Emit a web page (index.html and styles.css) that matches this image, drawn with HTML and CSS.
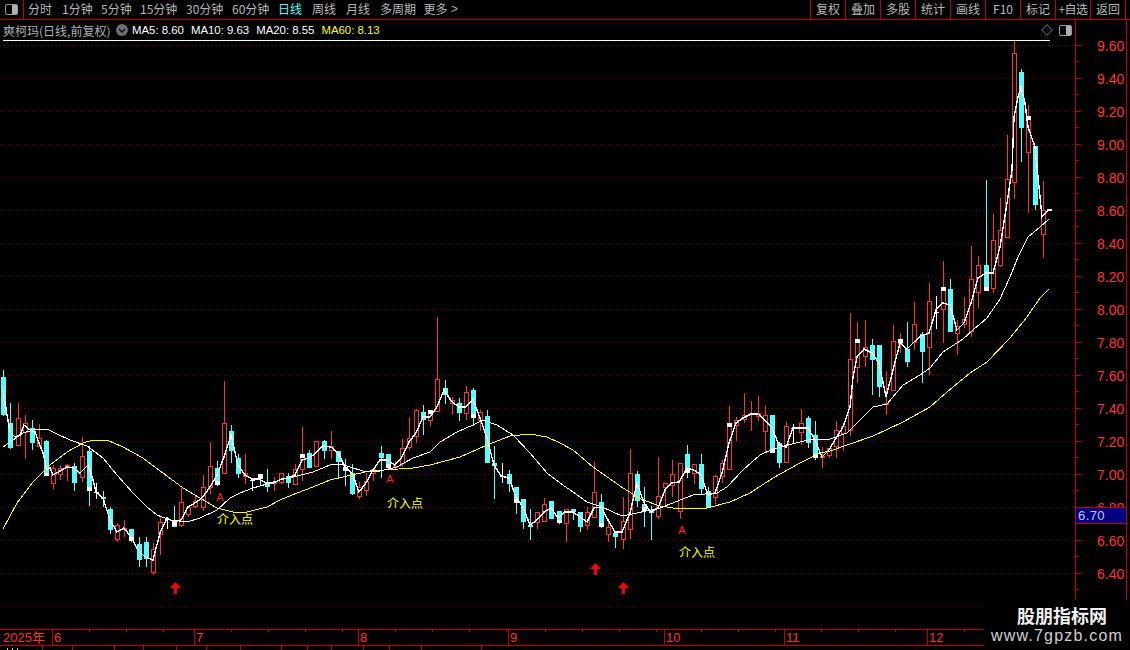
FILE: index.html
```html
<!DOCTYPE html>
<html lang="zh-CN">
<head>
<meta charset="utf-8">
<title>爽柯玛 日线</title>
<link rel="stylesheet" href="styles.css">
</head>
<body>
<div class="app">
  <header class="toolbar">
    <div class="panel-btn"><svg class="panel-icon" viewBox="0 0 13 11"><rect x="0.5" y="0.5" width="12" height="10" rx="1.5" fill="#000" stroke="#9a9a9a"/><rect x="7" y="1" width="5" height="9" fill="#b0b0b0"/></svg></div>
    <nav class="periods">
      <span class="p w24">分时</span><span class="p w30">1分钟</span><span class="p w30">5分钟</span><span class="p w36">15分钟</span><span class="p w36">30分钟</span><span class="p w36">60分钟</span><span class="p w24 on">日线</span><span class="p w24">周线</span><span class="p w24">月线</span><span class="p w36">多周期</span><span class="p w26">更多</span><span class="more">&gt;</span>
    </nav>
    <nav class="tools">
      <span class="t">复权</span><span class="t">叠加</span><span class="t">多股</span><span class="t">统计</span><span class="t">画线</span><span class="t">F10</span><span class="t">标记</span><span class="t tight">+自选</span><span class="t">返回</span>
    </nav>
  </header>
  <main class="main">
    <section class="pane">
      <div class="info">
        <span class="stock">爽柯玛(日线,前复权)</span>
        <svg class="chev" viewBox="0 0 12 12"><circle cx="6" cy="6" r="6" fill="#6e6e6e"/><path d="M3 5l3 3 3-3" fill="none" stroke="#111" stroke-width="1.4"/></svg>
        <span class="ma">MA5: 8.60</span><span class="ma">MA10: 9.63</span><span class="ma">MA20: 8.55</span><span class="ma y">MA60: 8.13</span>
        <span class="info-icons">
          <svg class="diamond" viewBox="0 0 12 12"><path d="M6 .7L11.3 6 6 11.3.7 6z" fill="none" stroke="#7c7c7c"/></svg>
          <svg class="panel-icon" viewBox="0 0 13 11"><rect x="0.5" y="0.5" width="12" height="10" rx="1.5" fill="#000" stroke="#9a9a9a"/><rect x="7" y="1" width="5" height="9" fill="#b0b0b0"/></svg>
        </span>
      </div>
      <svg id="plot" class="plot" viewBox="0 40 1075 590"></svg>
    </section>
    <aside class="axis">
      <svg id="scale" class="scale" viewBox="1076 20 50 610"></svg>
      <div class="last">6.70</div>
    </aside>
  </main>
  <footer class="timeline">
    <span class="m first">2025年</span><span class="m">6</span><span class="m">7</span><span class="m">8</span><span class="m">9</span><span class="m">10</span><span class="m">11</span><span class="m">12</span>
  </footer>
  <div class="tabs"><span></span><span></span><span></span><span></span><span></span><span></span><span></span><span></span><span></span><span></span><span></span><span></span><span></span><span></span></div>
  <div class="mark">
    <div class="mark-name">股朋指标网</div>
    <div class="mark-url">www.7gpzb.com</div>
  </div>
</div>
<script src="chart.js"></script>
</body>
</html>
```
FILE: styles.css
```css
* { box-sizing: border-box; }
html, body { margin: 0; height: 100%; background: #000; overflow: hidden; }
body { font-family: "Noto Sans CJK SC", "Liberation Sans", sans-serif; color: #c0c0c0; }
.app { position: relative; width: 1130px; height: 650px; display: flex; flex-direction: column; background: #000; }

.toolbar { height: 20px; flex: none; display: flex; border-bottom: 1px solid #c00000; font-size: 12px; line-height: 18px; color: #b8b8b8; }
.panel-btn { width: 24px; flex: none; border-right: 1px solid #c00000; display: flex; align-items: center; justify-content: center; }
.panel-icon { width: 13px; height: 11px; display: block; }
.periods { display: flex; padding-left: 4px; gap: 10px; flex: 1; white-space: nowrap; }
.p { display: block; text-align: center; }
.w24 { width: 24px; }
.w26 { width: 25px; margin-left: -3px; }
.w30 { width: 29px; }
.w36 { width: 36px; }
.on { color: #55ffff; }
.more { margin-left: -7px; color: #b0b0b0; font-family: "Liberation Sans", sans-serif; }
.tools { display: flex; width: 316px; margin-right: 4px; border-left: 1px solid #c00000; border-right: 1px solid #c00000; }
.t { flex: 1; text-align: center; border-left: 1px solid #c00000; white-space: nowrap; }
.t:first-child { border-left: 0; }
.tight { letter-spacing: -0.5px; }

.main { flex: 1; display: flex; min-height: 0; }
.pane { width: 1075px; flex: none; display: flex; flex-direction: column; }
.info { height: 20px; flex: none; display: flex; align-items: center; padding-left: 3px; font-size: 12px; white-space: nowrap; }
.stock { width: 113px; flex: none; color: #b0b0b0; }
.chev { width: 12px; height: 12px; flex: none; margin-right: 4px; }
.ma { font: 11.4px "Liberation Sans", sans-serif; color: #fff; margin-right: 7px; }
.y { color: #ffff00; }
.info-icons { margin-left: auto; display: flex; align-items: center; gap: 6px; padding-right: 3px; }
.diamond { width: 12px; height: 12px; display: block; }
.plot { width: 1075px; height: 590px; display: block; flex: none; }
.axis { position: relative; width: 52px; flex: none; border-left: 1px solid #c00000; border-right: 1px solid #c00000; }
.scale { width: 50px; height: 610px; display: block; }
.last { position: absolute; left: -1px; right: -1px; top: 487px; height: 17px; background: #000080; border: 1px solid #c00000; color: #c4c4e8; font: 13px/15px "Liberation Sans", sans-serif; padding-left: 2px; letter-spacing: 0.4px; }

.timeline { height: 17px; flex: none; display: grid; grid-template-columns: 52px 142px 164px 150px 156px 120px 143px 1fr; border-top: 1px solid #c00000; border-bottom: 1px solid #c00000; color: #ff3232; font-size: 13px; line-height: 15px; }
.m { padding-left: 1px; font-family: "Liberation Sans", sans-serif; border-left: 1px solid #c00000; background: repeating-linear-gradient(90deg, transparent 0 36px, #c00000 36px 37px) 0 0 / 100% 2px no-repeat; }
.first { padding-left: 3px; border-left: 0; background: none; font-family: "Liberation Sans", "Noto Sans CJK SC", sans-serif; }

.tabs { height: 4px; flex: none; display: grid; grid-template-columns: 43px 30px 42px 29px 33px 30px 34px 41px 26px 24px 32px 26px 32px 60px; }
.tabs span { border-right: 1px solid #c00000; }
.tabs span:first-child { background: repeating-linear-gradient(90deg, #c8c8c8 0 1px, transparent 1px 5px) 7px 2px / 14px 2px no-repeat; }

.mark { position: absolute; right: 0; bottom: 0; width: 146px; height: 50px; background: #000; text-align: center; }
.mark-name { color: #f0f0f0; font-size: 18px; font-weight: 700; line-height: 24px; margin-top: 3px; padding-left: 10px; }
.mark-url { color: #d0d0d0; font: 16px/18px "Liberation Sans", sans-serif; letter-spacing: 1.2px; }

.label { font: 12px "Noto Sans CJK SC", sans-serif; fill: #ffff00; }
.letter { font: 11px "Liberation Sans", sans-serif; fill: #ff2020; }
.price { font: 14px "Liberation Sans", sans-serif; fill: #ff3232; }
.crisp { shape-rendering: crispEdges; }
```
FILE: chart.js
```js
// [high, top, bottom, low, type, whiteTop?, whiteBottom?]  r=hollow red, c=cyan, w=white doji (y of bar in top)
const candles = [
[370,377,415,416,'c'],[403,423,448,449,'c'],[403,418,446,446,'r'],[415,423,433,459,'r'],[420,428,443,450,'c'],[424,438,447,447,'r'],[440,441,476,476,'c',473,476],[465,468,484,489,'r'],[465,468,475,480,'r'],[464,465,467,481,'r'],
[463,466,483,491,'c'],[437,456,478,482,'r'],[446,451,491,506,'c',487,491],[483,492,492,499,'w'],[491,497,499,507,'c'],[507,509,530,534,'c'],[523,525,540,542,'r'],[520,528,529,537,'r'],[529,529,541,542,'c',537,541],[537,544,560,567,'c'],
[537,542,559,567,'c'],[543,549,573,575,'r'],[517,522,535,555,'r'],[517,519,519,529,'w'],[506,521,527,527,'c',521,526],[488,502,526,527,'r'],[506,507,515,517,'r'],[496,501,507,508,'r'],[475,487,508,511,'r'],[442,466,488,494,'r'],
[461,468,485,486,'c',481,485],[381,423,474,474,'r'],[425,431,451,463,'c'],[454,458,474,478,'c'],[454,473,477,484,'r'],[478,480,480,491,'w'],[474,474,479,485,'c',474,479],[469,482,487,492,'c'],[477,482,484,491,'r'],[473,473,483,484,'r'],
[473,476,483,488,'c'],[464,469,485,485,'r'],[427,454,470,481,'r',454,458],[450,453,468,468,'c'],[441,441,467,467,'r'],[440,441,451,459,'c'],[431,446,451,459,'r'],[451,451,462,478,'c'],[459,467,471,486,'c',467,471],[464,473,494,495,'c'],
[482,487,497,499,'r'],[473,481,491,496,'r'],[469,469,474,481,'r'],[446,453,458,478,'c'],[454,454,468,469,'c',464,468],[461,466,468,469,'r'],[439,448,464,467,'r'],[417,438,448,450,'r'],[409,410,437,443,'r'],[405,412,420,435,'c'],
[410,410,421,426,'r',410,414],[317,379,412,412,'r'],[380,388,395,404,'c'],[397,400,404,415,'r'],[398,403,413,421,'c'],[386,392,414,420,'r'],[388,390,418,426,'c',414,418],[410,412,421,431,'r'],[410,416,463,463,'c'],[446,463,466,499,'c'],
[463,476,476,483,'w'],[470,474,484,492,'c'],[487,487,503,514,'c',499,503],[499,499,522,529,'c'],[509,525,527,540,'c'],[512,512,523,529,'r'],[498,504,522,522,'r'],[501,501,519,519,'c'],[511,511,523,524,'c',520,523],[509,509,524,542,'r'],
[509,509,512,520,'c'],[512,512,527,532,'c'],[507,512,526,530,'r'],[462,492,518,518,'r'],[494,502,527,528,'c',523,527],[522,527,535,542,'r'],[533,533,537,548,'c'],[497,521,540,549,'r'],[449,473,530,539,'r'],[471,474,501,507,'c'],
[487,504,511,527,'c',507,511],[506,511,513,540,'c'],[457,496,517,519,'r'],[483,483,488,507,'r'],[460,474,486,497,'r'],[463,463,512,519,'r'],[445,454,473,478,'c',469,473],[464,464,474,484,'r'],[454,464,489,495,'c'],[487,491,508,508,'c'],
[475,476,498,504,'r'],[460,463,477,483,'r'],[406,424,470,470,'r',423,427],[417,420,426,441,'r'],[393,415,420,423,'r'],[401,413,415,431,'r'],[396,413,417,421,'r'],[406,415,432,452,'r'],[415,415,452,453,'c',449,453],[442,443,463,468,'c'],
[422,426,463,463,'r'],[424,428,428,443,'w'],[409,423,433,445,'r'],[416,418,443,448,'c'],[421,435,458,460,'c',454,458],[447,456,458,468,'r'],[448,448,456,458,'r'],[421,430,447,458,'r'],[426,426,434,451,'r'],[313,359,431,436,'r'],
[322,341,368,383,'r',339,343],[320,347,357,367,'r'],[339,345,360,395,'c'],[345,345,387,397,'c'],[371,403,405,415,'r'],[325,341,391,391,'r'],[333,339,345,353,'r',339,343],[322,349,362,367,'c'],[302,324,343,350,'r'],[332,334,352,383,'c'],
[283,301,348,375,'r'],[296,312,312,329,'w'],[261,290,310,343,'r',287,291],[279,289,332,332,'c'],[320,326,334,355,'r'],[297,319,325,328,'r'],[246,279,332,337,'r'],[256,265,293,308,'r'],[180,265,291,291,'c',287,291],[214,240,289,293,'r'],
[198,230,266,267,'r'],[135,179,238,238,'r'],[41,53,183,199,'r'],[69,72,128,162,'c'],[105,116,153,213,'r',116,120],[146,146,205,210,'c'],[181,210,235,258,'r']
];

const ma5 = "3,390 7,415 10,432 15,437 20,435 24,425 30,430 35,432 39,443 43,453 47,470 50,468 53,475 60,471 67,467 73,468 80,473 88,465 93,480 96,492 103,498 110,520 117,532 124,528 131,537 138,550 145,557 153,560 160,533 167,518 174,522 181,520 188,507 195,503 202,498 210,487 217,475 224,457 231,435 238,465 245,475 252,479 259,479 266,483 273,483 282,479 288,478 295,475 302,460 309,458 316,453 323,446 331,447 338,453 345,467 352,473 359,492 366,483 373,470 380,460 387,460 395,465 402,457 409,442 416,433 423,417 430,417 437,407 444,390 452,402 459,407 466,407 473,399 480,418 487,438 494,465 501,476 509,478 516,497 523,507 530,525 537,520 544,512 551,508 558,518 565,512 573,512 580,517 587,522 594,508 601,507 608,520 615,532 622,532 630,513 637,483 644,503 651,512 658,508 665,490 672,483 679,482 687,468 694,470 701,475 708,495 715,493 722,473 729,443 736,423 743,418 751,414 758,414 765,420 772,428 779,445 786,447 793,428 800,428 808,428 815,440 822,457 829,450 836,438 843,427 850,407 853,377 857,357 864,349 872,353 879,363 886,397 893,370 900,343 907,349 914,342 921,336 929,333 936,310 943,303 950,305 957,330 964,323 971,303 978,278 986,273 993,273 1000,247 1007,203 1012,170 1014,117 1018,97 1021,87 1025,103 1028,127 1035,147 1038,177 1042,217 1048,210 1052,210";
const ma20 = "3,447 13,440 23,433 33,430 47,429 57,434 70,440 87,446 103,458 117,475 133,493 147,507 157,515 170,520 187,522 200,518 217,510 230,498 240,493 253,488 267,484 280,480 297,476 313,472 330,465 340,464 363,471 380,471 397,467 413,458 430,452 440,442 457,432 473,425 483,420 497,425 513,435 530,453 547,473 560,483 573,492 587,502 602,507 622,516 637,513 660,508 693,495 717,493 727,487 743,470 760,455 773,449 800,442 813,439 830,439 847,433 860,420 873,407 887,404 903,385 920,375 930,368 943,352 963,339 973,330 987,318 1000,299 1010,277 1018,257 1028,237 1040,227 1049,219";
const ma60 = "3,529 17,503 33,482 50,465 67,452 83,443 93,440 107,440 123,447 143,458 163,473 183,488 200,498 217,508 233,512 247,512 267,507 280,500 297,493 313,487 330,480 347,476 370,471 413,468 430,465 460,457 487,445 510,436 530,434 547,437 560,443 573,450 593,467 623,488 643,500 660,506 680,509 707,508 730,502 750,493 773,478 800,463 820,453 830,451 850,444 873,436 903,422 930,407 947,392 970,373 987,362 1010,338 1027,317 1040,298 1049,289";

const RED = '#ff3232', CYAN = '#55ffff', WHITE = '#ffffff', YEL = '#ffff00', GRID = '#800000', AXIS = '#c00000';
const rect = (x, y, w, h, f) => `<rect x="${x}" y="${y}" width="${w}" height="${h}" fill="${f}"/>`;

let s = '';
s += rect(3, 40, 1047, 1, WHITE);
for (let k = 0; k <= 17; k++) {
  const y = 45.5 + 33 * k;
  s += `<line x1="0" x2="1075" y1="${y}" y2="${y}" stroke="${GRID}" stroke-dasharray="1 3"/>`;
}
candles.forEach((c, i) => {
  const [hi, top, bot, lo, type, wt, wb] = c;
  const x = Math.round(3.3 + 7.118 * i);
  const col = type === 'r' ? RED : type === 'c' ? CYAN : WHITE;
  s += rect(x, hi, 1, lo - hi, col);
  if (type === 'w') { s += rect(x - 2, top, 5, 1, WHITE); return; }
  if (type === 'c') s += rect(x - 2, top, 5, Math.max(bot - top, 1), CYAN);
  else s += `<rect x="${x - 1.5}" y="${top + 0.5}" width="4" height="${Math.max(bot - top - 1, 1)}" fill="#000" stroke="${RED}"/>`;
  if (wt) s += rect(x - 2, wt, 5, wb - wt, WHITE);
});
s += `<polyline class="crisp" points="${ma60}" fill="none" stroke="${YEL}" stroke-width="1"/>`;
s += `<polyline class="crisp" points="${ma20}" fill="none" stroke="${WHITE}" stroke-width="1"/>`;
s += `<polyline class="crisp" points="${ma5}" fill="none" stroke="${WHITE}" stroke-width="1.4"/>`;
[[220, 501], [390, 483], [682, 534]].forEach(([x, y]) => { s += `<text class="letter" x="${x}" y="${y}" text-anchor="middle">A</text>`; });
[[217, 524], [387, 508], [679, 557]].forEach(([x, y]) => { s += `<text class="label" x="${x}" y="${y}">介入点</text>`; });
[[175, 582], [595, 563], [623, 582]].forEach(([x, y]) => {
  s += `<path d="M${x + 0.5} ${y}l5.5 6h-4v6h-3v-6h-4z" fill="#ff0000"/>`;
});
document.getElementById('plot').innerHTML = s;

let a = '';
for (let k = 0; k <= 34; k++) {
  const y = Math.floor(45 + 16.5 * k);
  a += rect(1076, y, k % 2 ? 3 : 5, 1, AXIS);
  if (k % 2 === 0 && k <= 32) {
    a += `<text class="price" x="1097" y="${y + 6}">${(9.6 - k * 0.1).toFixed(2)}</text>`;
  }
}
document.getElementById('scale').innerHTML = a;
```
